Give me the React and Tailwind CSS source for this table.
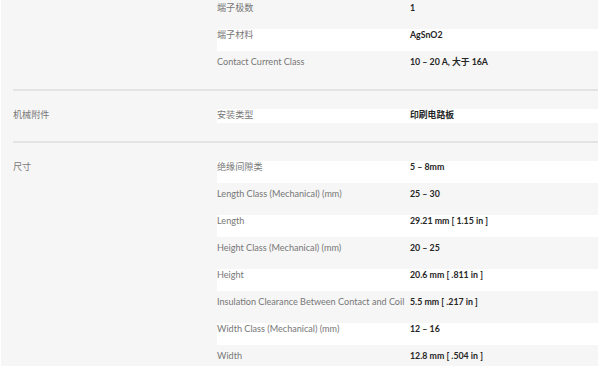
import React from 'react';

const sections = [
  {
    label: '',
    first: true,
    rows: [
      { name: '端子极数', value: '1', white: false },
      { name: '端子材料', value: 'AgSnO2', white: true },
      { name: 'Contact Current Class', value: '10 – 20 A, 大于 16A', white: false },
    ],
  },
  {
    label: '机械附件',
    rows: [{ name: '安装类型', value: '印刷电路板', white: true }],
  },
  {
    label: '尺寸',
    rows: [
      { name: '绝缘间隙类', value: '5 – 8mm', white: true },
      { name: 'Length Class (Mechanical) (mm)', value: '25 – 30', white: false },
      { name: 'Length', value: '29.21 mm [ 1.15 in ]', white: true },
      { name: 'Height Class (Mechanical) (mm)', value: '20 – 25', white: false },
      { name: 'Height', value: '20.6 mm [ .811 in ]', white: true },
      { name: 'Insulation Clearance Between Contact and Coil', value: '5.5 mm [ .217 in ]', white: false },
      { name: 'Width Class (Mechanical) (mm)', value: '12 – 16', white: true },
      { name: 'Width', value: '12.8 mm [ .504 in ]', white: false },
    ],
  },
];

const Row = ({ name, value, white, last }) => (
  <div className={`flex items-start ${last ? 'h-[14px]' : 'h-[22px]'} ${white ? 'bg-white' : ''}`}>
    <div className="w-[193px] shrink-0 whitespace-nowrap text-[9.1px] leading-[12px] text-[#777777]">{name}</div>
    <div className="whitespace-nowrap text-[8.8px] leading-[12px] font-bold text-[#262626]">{value}</div>
  </div>
);

export default function App() {
  return (
    <div className="w-[600px] h-[367px] bg-white overflow-hidden" style={{ fontFamily: 'Lato, "Noto Sans CJK SC", sans-serif' }}>
      <div className="ml-[1px] mr-[2px] h-[366px] bg-[#f6f6f6] overflow-hidden pl-[12px] pt-[2px]">
        {sections.map((s, i) => (
          <div
            key={i}
            className={`flex ${s.first ? 'pb-[19px]' : 'border-t-2 border-[#e4e4e4] pt-[18px] pb-[18px]'}`}
          >
            <div className="w-[204px] shrink-0 text-[9.1px] leading-[12px] text-[#777777]">{s.label}</div>
            <div className="flex-1 flex flex-col gap-[5px]">
              {s.rows.map((r, j) => (
                <Row key={j} {...r} last={j === s.rows.length - 1} />
              ))}
            </div>
          </div>
        ))}
      </div>
    </div>
  );
}
